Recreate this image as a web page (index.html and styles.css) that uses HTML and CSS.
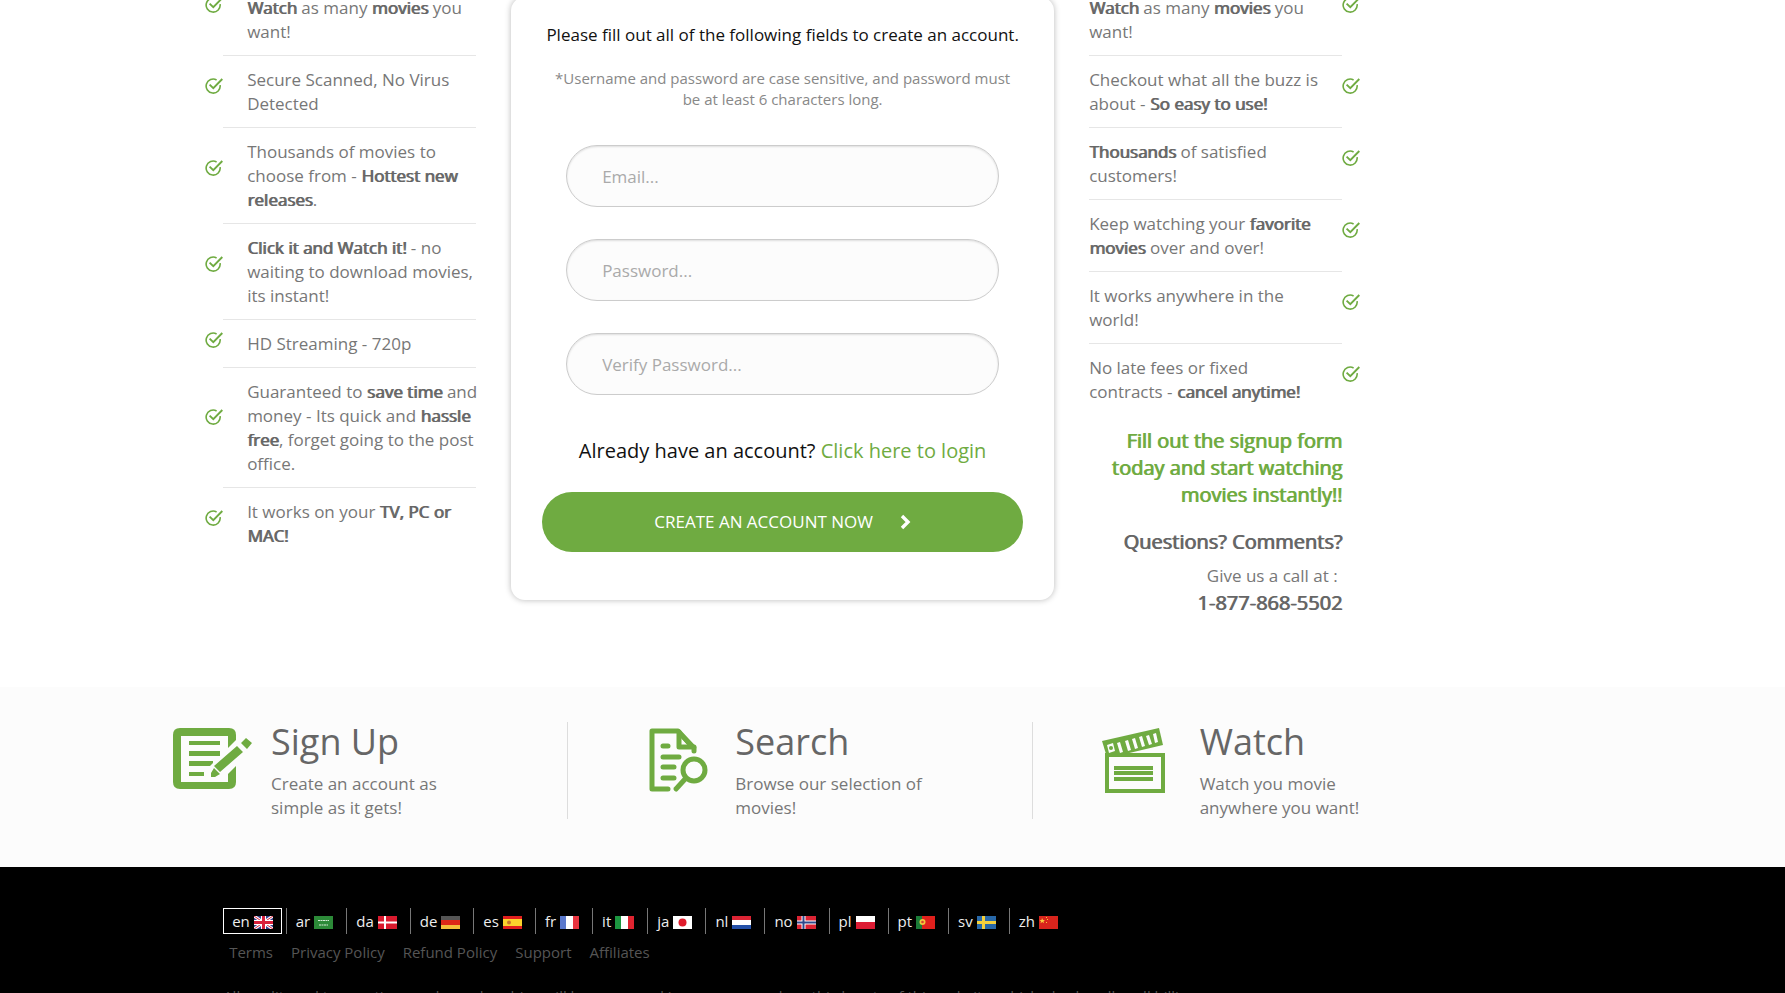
FILE: index.html
```html
<!DOCTYPE html>
<html lang="en">
<head>
    <meta charset="UTF-8">
    <meta name="viewport" content="width=device-width, initial-scale=1.0">
    <title>Create an Account</title>
    <link rel="stylesheet" href="styles.css">
</head>
<body>
    <svg class="sprite" aria-hidden="true">
        <symbol id="check" viewBox="0 0 18 16">
            <path d="M15.1 7.2A7 7 0 1 1 11.6 2" fill="none" stroke="currentColor" stroke-width="1.6"/>
            <path d="M4.6 6.6l3.7 3.6L17.3 1" fill="none" stroke="currentColor" stroke-width="1.9"/>
        </symbol>
    </svg>

    <main class="signup">
        <ul class="features features-left">
            <li><span class="marker"><svg class="check"><use href="#check"/></svg></span><p><b>Watch</b> as many <b>movies</b> you want!</p></li>
            <li><span class="marker"><svg class="check"><use href="#check"/></svg></span><p>Secure Scanned, No Virus Detected</p></li>
            <li><span class="marker"><svg class="check"><use href="#check"/></svg></span><p>Thousands of movies to choose from - <b>Hottest new releases</b>.</p></li>
            <li><span class="marker"><svg class="check"><use href="#check"/></svg></span><p><b>Click it and Watch it!</b> - no waiting to download movies, its instant!</p></li>
            <li><span class="marker"><svg class="check"><use href="#check"/></svg></span><p>HD Streaming - 720p</p></li>
            <li><span class="marker"><svg class="check"><use href="#check"/></svg></span><p>Guaranteed to <b>save time</b> and money - Its quick and <b>hassle free</b>, forget going to the post office.</p></li>
            <li><span class="marker"><svg class="check"><use href="#check"/></svg></span><p>It works on your <b>TV, PC or MAC!</b></p></li>
        </ul>

        <form class="card">
            <p class="card-title">Please fill out all of the following fields to create an account.</p>
            <p class="card-note">*Username and password are case sensitive, and password must be at least 6 characters long.</p>
            <div class="fields">
                <input type="email" aria-label="Email" placeholder="Email...">
                <input type="password" aria-label="Password" placeholder="Password...">
                <input type="password" aria-label="Verify Password" placeholder="Verify Password...">
            </div>
            <p class="login">Already have an account? <a href="#">Click here to login</a></p>
            <button type="submit" class="create">
                CREATE AN ACCOUNT NOW
                <svg width="11" height="16" viewBox="0 0 11 16"><path d="M2 2l6 6-6 6" fill="none" stroke="currentColor" stroke-width="3.4"/></svg>
            </button>
        </form>

        <div class="side">
            <ul class="features features-right">
                <li><p><b>Watch</b> as many <b>movies</b> you want!</p><span class="marker"><svg class="check"><use href="#check"/></svg></span></li>
                <li><p>Checkout what all the buzz is about - <b>So easy to use!</b></p><span class="marker"><svg class="check"><use href="#check"/></svg></span></li>
                <li><p><b>Thousands</b> of satisfied customers!</p><span class="marker"><svg class="check"><use href="#check"/></svg></span></li>
                <li><p>Keep watching your <b>favorite movies</b> over and over!</p><span class="marker"><svg class="check"><use href="#check"/></svg></span></li>
                <li><p>It works anywhere in the world!</p><span class="marker"><svg class="check"><use href="#check"/></svg></span></li>
                <li><p>No late fees or fixed contracts - <b>cancel anytime!</b></p><span class="marker"><svg class="check"><use href="#check"/></svg></span></li>
            </ul>
            <p class="callout">Fill out the signup form today and start watching movies instantly!!</p>
            <p class="questions">Questions? Comments?</p>
            <p class="call">Give us a call at :&nbsp;</p>
            <p class="phone">1-877-868-5502</p>
        </div>
    </main>

    <section class="steps">
        <div class="steps-row">
            <div class="step">
                <svg class="step-icon" viewBox="0 0 84 66">
                    <path fill-rule="evenodd" d="M10 0h49q7 0 7 7v6l-8 8V8H11v46h47V46l8-8v16q0 7-7 7H10q-7 0-7-7V7q0-7 7-7z"/>
                    <path d="M19 13h31v4H19zM19 23h31v5H19zM19 33h24v5H19zM19 44h15v4H19z"/>
                    <path class="cut" d="M66 12l10 10-28 28-10-10z"/>
                    <path d="M67 18l6 6-23 20-6-6zM76 10l6 5-5 6-6-6zM44 40l6 6-5 3h-4v-4z"/>
                </svg>
                <div>
                    <h2>Sign Up</h2>
                    <p>Create an account as simple as it gets!</p>
                </div>
            </div>
            <div class="step">
                <svg class="step-icon" viewBox="0 0 84 66">
                    <g fill="none" stroke="currentColor" stroke-width="5" stroke-linecap="round" stroke-linejoin="round">
                        <path d="M34 61H18V3h26l16 17v3"/>
                        <path d="M45 4v15h15"/>
                        <path d="M29 18h5M29 29h16M29 39h11M29 50h11"/>
                        <circle cx="60" cy="42" r="11"/>
                        <path d="M52 50L42 61"/>
                    </g>
                    <path d="M43 3h4l15 17h-6l-9-10v9h-4z"/>
                </svg>
                <div>
                    <h2>Search</h2>
                    <p>Browse our selection of movies!</p>
                </div>
            </div>
            <div class="step">
                <svg class="step-icon" viewBox="0 0 84 66">
                    <path fill-rule="evenodd" d="M6 25h60v40H6zM10 29v32h52V29z"/>
                    <path d="M15 38h39v4H15zM15 43h39v4H15zM15 49h39v4H15z"/>
                    <path d="M3 13L60 0l4 17-38 9H7z"/>
                    <path class="cut" d="M8 17l6-2 2 8-6 2zM18 15l3-1 3 10-3 1zM26 13l3-1 3 10-3 1zM33 11l3-1 3 10-3 1zM40 9l3-1 3 10-3 1zM47 8l3-1 3 9-3 1zM54 6l3-1 2 9-3 1z"/>
                    <circle cx="12" cy="20" r="2"/>
                </svg>
                <div>
                    <h2>Watch</h2>
                    <p>Watch you movie anywhere you want!</p>
                </div>
            </div>
        </div>
    </section>

    <footer>
        <ul class="languages">
            <li><a href="#" class="current">en
                <svg class="flag" viewBox="0 0 19 13"><path fill="#35408f" d="M0 0h19v13H0z"/><path stroke="#fff" stroke-width="3" d="M0 0l19 13M19 0L0 13"/><path stroke="#d8203c" d="M0 0l19 13M19 0L0 13"/><path stroke="#fff" stroke-width="5" d="M9.5 0v13M0 6.5h19"/><path stroke="#d8203c" stroke-width="3" d="M9.5 0v13M0 6.5h19"/></svg></a></li>
            <li><a href="#">ar
                <svg class="flag" viewBox="0 0 19 13"><path fill="#2c8a38" d="M0 0h19v13H0z"/><path stroke="#d5ecd6" d="M4 4.5h11M5 9h9" stroke-dasharray="2 .5"/></svg></a></li>
            <li><a href="#">da
                <svg class="flag" viewBox="0 0 19 13"><path fill="#d91a2e" d="M0 0h19v13H0z"/><path stroke="#fff" stroke-width="2" d="M7 0v13M0 6.5h19"/></svg></a></li>
            <li><a href="#">de
                <svg class="flag" viewBox="0 0 19 13"><path fill="#555" d="M0 0h19v4H0z"/><path fill="#dc2818" d="M0 4h19v5H0z"/><path fill="#f3bf3a" d="M0 9h19v4H0z"/></svg></a></li>
            <li><a href="#">es
                <svg class="flag" viewBox="0 0 19 13"><path fill="#e01e1e" d="M0 0h19v13H0z"/><path fill="#fbd22c" d="M0 3h19v7H0z"/><circle cx="6" cy="6.5" r="2" fill="#c8742c"/></svg></a></li>
            <li><a href="#">fr
                <svg class="flag" viewBox="0 0 19 13"><path fill="#5a78cc" d="M0 0h6v13H0z"/><path fill="#fff" d="M6 0h7v13H6z"/><path fill="#e83440" d="M13 0h6v13h-6z"/></svg></a></li>
            <li><a href="#">it
                <svg class="flag" viewBox="0 0 19 13"><path fill="#1c9640" d="M0 0h6v13H0z"/><path fill="#fff" d="M6 0h7v13H6z"/><path fill="#e02430" d="M13 0h6v13h-6z"/></svg></a></li>
            <li><a href="#">ja
                <svg class="flag" viewBox="0 0 19 13"><path fill="#fff" d="M0 0h19v13H0z"/><circle cx="9.5" cy="6.5" r="4" fill="#e01c2c"/></svg></a></li>
            <li><a href="#">nl
                <svg class="flag" viewBox="0 0 19 13"><path fill="#dc2434" d="M0 0h19v4H0z"/><path fill="#fff" d="M0 4h19v5H0z"/><path fill="#2450a8" d="M0 9h19v4H0z"/></svg></a></li>
            <li><a href="#">no
                <svg class="flag" viewBox="0 0 19 13"><path fill="#dc2434" d="M0 0h19v13H0z"/><path stroke="#fff" stroke-width="4" d="M6.5 0v13M0 6.5h19"/><path stroke="#30488c" stroke-width="2" d="M6.5 0v13M0 6.5h19"/></svg></a></li>
            <li><a href="#">pl
                <svg class="flag" viewBox="0 0 19 13"><path fill="#fff" d="M0 0h19v6H0z"/><path fill="#dc1c34" d="M0 6h19v7H0z"/></svg></a></li>
            <li><a href="#">pt
                <svg class="flag" viewBox="0 0 19 13"><path fill="#e0201c" d="M0 0h19v13H0z"/><path fill="#1c7c38" d="M0 0h6v13H0z"/><circle cx="6.5" cy="6" r="3" fill="#f0c83c"/><circle cx="6.5" cy="6" r="1.3" fill="#d8402c"/></svg></a></li>
            <li><a href="#">sv
                <svg class="flag" viewBox="0 0 19 13"><path fill="#2868a8" d="M0 0h19v13H0z"/><path stroke="#f4d03c" stroke-width="3" d="M6.5 0v13M0 6.5h19"/></svg></a></li>
            <li><a href="#">zh
                <svg class="flag" viewBox="0 0 19 13"><path fill="#d8241c" d="M0 0h19v13H0z"/><path fill="#f8c83c" d="M3 2l1 2h2L4.5 5.2 5 7.2 3.300 6 1.500 7.200 2 5.200.5 4h2zM7 1h1v1H7zM8 3h1v1H8zM7 6h1v1H7z"/></svg></a></li>
        </ul>
        <nav class="links">
            <a href="#">Terms</a>
            <a href="#">Privacy Policy</a>
            <a href="#">Refund Policy</a>
            <a href="#">Support</a>
            <a href="#">Affiliates</a>
        </nav>
        <p class="legal">All credit card transactions and memberships will be processed in a secure way by a third party of this website, which also handles all billing.</p>
    </footer>
</body>
</html>
```

FILE: styles.css
```css
/* General Styles */
* {
    box-sizing: border-box;
}

body {
    margin: 0;
    height: 100vh;
    display: flex;
    flex-direction: column;
    overflow: hidden;
    font-family: 'Open Sans', sans-serif;
    font-size: 17px;
    line-height: 24px;
    color: #777;
    background-color: #fff;
}

p, ul, h2 {
    margin: 0;
    padding: 0;
}

ul {
    list-style: none;
}

a {
    color: #6fab41;
    text-decoration: none;
}

/* Emphasis thickens the regular face and keeps its width */
b, .callout, .questions, .phone {
    font-weight: normal;
    color: #666;
    text-shadow: 1px 0 currentColor;
}

.sprite {
    display: none;
}

/* Sign up area */
.signup {
    display: grid;
    grid-template-columns: 253fr 543fr 253fr;
    gap: 35px;
    align-items: start;
    max-width: 1119px;
    margin: -31px 0 0 12.5%;
}

.features li {
    display: flex;
    border-bottom: 1px solid #e6e6e6;
}

.features li:last-child {
    border-bottom: 0;
}

.features p {
    flex: 1;
    padding: 12px 0 11px;
}

.features li:first-child p {
    padding-top: 27px;
}

.features-left p {
    margin-right: -4px;
}

.features-right p {
    padding-right: 18px;
}

/* Column that keeps the tick a little above the middle of its row */
.marker {
    display: flex;
    flex-direction: column;
}

.marker::before {
    content: "";
    flex: 2;
}

.marker::after {
    content: "";
    flex: 3;
}

.check {
    flex: none;
    width: 18px;
    height: 16px;
    color: #6fab41;
}

.features-left .marker {
    margin: 0 24px 0 -18px;
}

.features-right .marker {
    margin-right: -18px;
}

/* Form card */
.card {
    margin-top: 28px;
    padding: 26px 31px 48px;
    text-align: center;
    border-radius: 14px;
    box-shadow: 0 0 6px rgba(0, 0, 0, 0.28);
}

.card-title {
    margin: 0 -10px;
    color: #111;
}

.card-note {
    margin: 21px 0 35px;
    padding: 0 6px;
    font-size: 15px;
    line-height: 21px;
    color: #888;
}

.fields {
    display: flex;
    flex-direction: column;
    gap: 32px;
    padding: 0 24px;
}

.fields input {
    height: 62px;
    padding: 0 35px;
    font: inherit;
    border: 1px solid #ccc;
    border-radius: 31px;
    background-color: #fcfcfc;
    box-shadow: inset 0 1px 2px rgba(0, 0, 0, 0.12);
}

.fields input::placeholder {
    color: #aaa;
}

.login {
    margin: 44px 0 29px;
    font-size: 20px;
    color: #111;
}

.create {
    display: flex;
    align-items: center;
    justify-content: center;
    gap: 27px;
    width: 100%;
    height: 60px;
    font: inherit;
    color: #fff;
    border: 0;
    border-radius: 30px;
    background-color: #6fab41;
}

/* Right column */
.side {
    text-align: right;
}

.features-right {
    text-align: left;
}

.callout, .questions, .phone {
    font-size: 20px;
    line-height: 27px;
}

.callout {
    margin: 12px 0 20px;
    color: #6fab41;
}

.call {
    margin: 9px 0 1px;
}

/* Steps */
.steps {
    margin-top: 71px;
    padding: 35px 0 48px;
    background-color: #fcfcfc;
}

.steps-row {
    display: grid;
    grid-template-columns: repeat(3, 1fr);
    max-width: 1393px;
    margin-left: 104px;
}

.step {
    display: flex;
    height: 97px;
    padding-left: 66px;
    border-right: 1px solid #ddd;
}

.step:last-child {
    border-right: 0;
}

.step-icon {
    flex: none;
    width: 84px;
    height: 66px;
    margin: 6px 17px 0 0;
    color: #6fab41;
    fill: currentColor;
}

.cut {
    fill: #fcfcfc;
}

.step h2 {
    margin-bottom: 10px;
    font-size: 36px;
    font-weight: normal;
    line-height: 40px;
    color: #666;
}

.step p {
    max-width: 190px;
}

/* Footer */
footer {
    flex: 1;
    padding: 41px 12.5% 0;
    font-size: 15px;
    background-color: #000;
}

.languages {
    display: flex;
    align-items: center;
}

.languages li {
    padding-right: 4px;
    border-right: 1px solid #777;
}

.languages li:last-child {
    border-right: 0;
}

.languages a {
    display: flex;
    align-items: center;
    gap: 4px;
    padding: 0 8px;
    color: #eee;
    border: 1px solid transparent;
}

.languages .current {
    border-color: #fff;
}

.flag {
    width: 19px;
    height: 13px;
    margin-top: 2px;
}

.links {
    display: flex;
    gap: 18px;
    padding: 6px;
}

.links a, .legal {
    color: #555;
}

.legal {
    margin-top: 14px;
}
```
